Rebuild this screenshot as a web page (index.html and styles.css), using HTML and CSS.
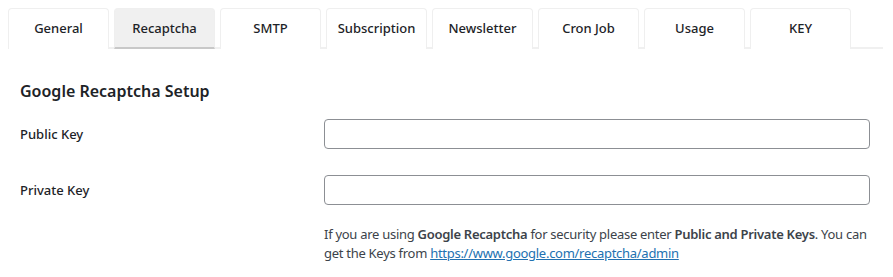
FILE: index.html
```html
<!DOCTYPE html>
<html>
<head>
<meta charset="utf-8">
<link rel="stylesheet" href="styles.css">
</head>
<body>
<div class="wrap">
  <nav class="tabs">
    <a class="tab">General</a>
    <a class="tab active">Recaptcha</a>
    <a class="tab">SMTP</a>
    <a class="tab">Subscription</a>
    <a class="tab">Newsletter</a>
    <a class="tab">Cron Job</a>
    <a class="tab">Usage</a>
    <a class="tab">KEY</a>
  </nav>
  <section class="panel">
    <h2 class="title">Google Recaptcha Setup</h2>
    <div class="row first">
      <label class="label">Public Key</label>
      <input class="field" type="text">
    </div>
    <div class="row">
      <label class="label">Private Key</label>
      <input class="field" type="text">
    </div>
    <div class="row note">
      <span class="label"></span>
      <p class="desc">If you are using <strong>Google Recaptcha</strong> for security please enter <strong>Public and Private Keys</strong>. You can get the Keys from <a href="#" class="link">https://www.google.com/recaptcha/admin</a></p>
    </div>
  </section>
</div>
</body>
</html>
```

FILE: styles.css
```css
html, body {
  margin: 0;
  padding: 0;
  background: #ffffff;
}
body {
  font-family: "Noto Sans", "Open Sans", sans-serif;
  color: #3c434a;
  font-size: 13px;
}
.wrap {
  padding: 8px 10px 0 8px;
}
.tabs {
  display: flex;
  gap: 5px;
  width: 875px;
  border-bottom: 2px solid #f0f0f0;
  box-sizing: border-box;
}
.tab {
  width: 101px;
  height: 41px;
  box-sizing: border-box;
  display: flex;
  align-items: center;
  justify-content: center;
  background: #ffffff;
  border: 1px solid #efefef;
  border-bottom: none;
  border-radius: 4px 4px 0 0;
  font-size: 13px;
  font-weight: 500;
  color: #1d2327;
  margin-bottom: -2px;
  padding-bottom: 2px;
}
.tab.active {
  background: #f0f0f0;
  border-bottom: 2px solid #c8c8c8;
  padding-bottom: 0;
}
.panel {
  padding: 0 0 0 12px;
}
.title {
  margin: 30px 0 0 0;
  font-size: 16px;
  font-weight: 600;
  color: #1d2327;
  line-height: 24px;
}
.row {
  display: flex;
  align-items: center;
}
.row.first {
  margin-top: 16px;
}
.row + .row {
  margin-top: 26px;
}
.row.note {
  margin-top: 20px;
}
.label {
  width: 304px;
  flex: none;
  font-weight: 500;
  color: #1d2327;
  font-size: 13px;
}
.field {
  width: 546px;
  height: 30px;
  box-sizing: border-box;
  border: 1px solid #8c8f94;
  border-radius: 4px;
  margin: 0;
  padding: 0 8px;
  background: #fff;
}
.desc {
  margin: 0;
  width: 556px;
  line-height: 19px;
  color: #3c434a;
  letter-spacing: -0.28px;
}
.desc strong {
  font-weight: 600;
}
.link {
  color: #2271b1;
  text-decoration: underline;
}
```
